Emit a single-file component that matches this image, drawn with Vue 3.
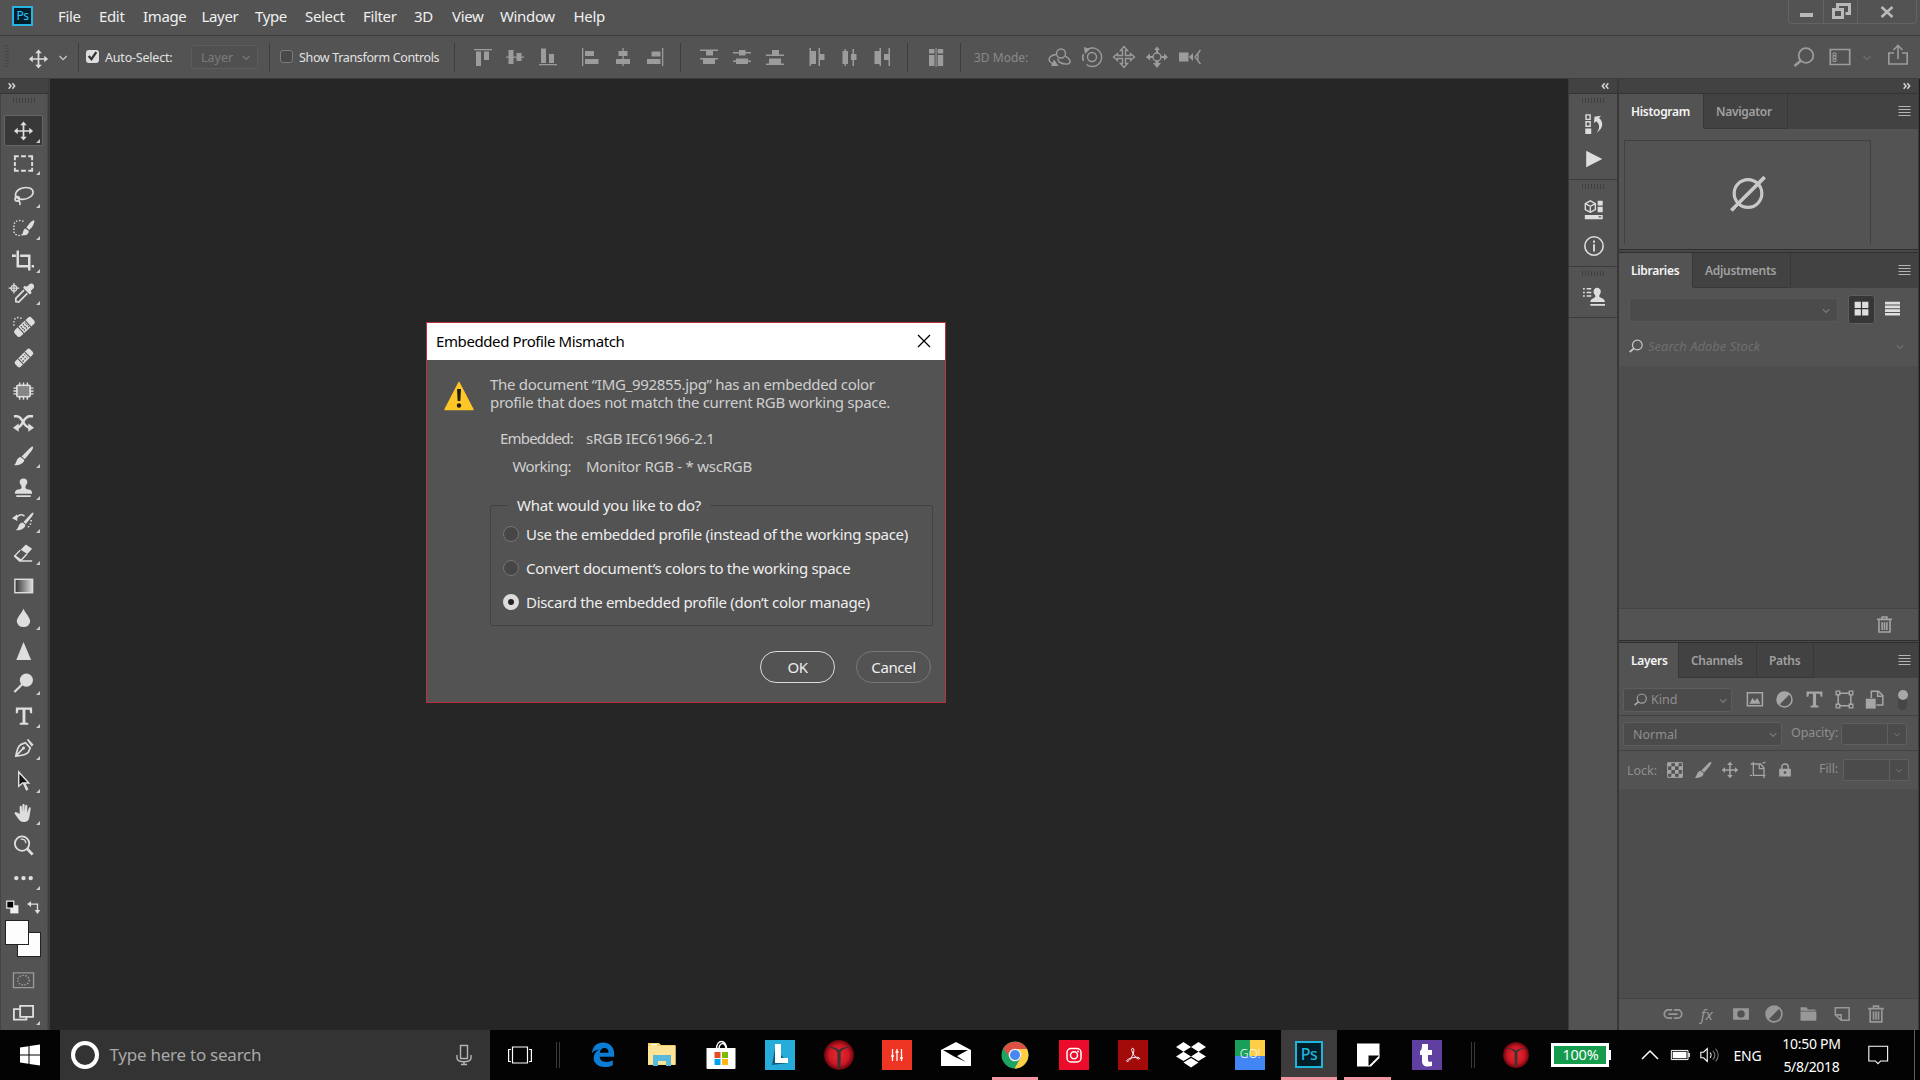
<template>
  <div class="screen">
    <header class="menubar">
      <div class="ps-logo">Ps</div>
      <nav class="menus">
        <span v-for="m in menus" :key="m.label" :style="{ width: m.w + 'px' }">{{ m.label }}</span>
      </nav>
      <div class="win-controls">
        <span class="min"><i></i></span>
        <span class="restore"><Icon name="restore" /></span>
        <span class="close"><Icon name="winClose" /></span>
      </div>
    </header>

    <div class="options">
      <i class="grip-v"></i>
      <Icon name="move" class="opt-move" />
      <Icon name="chevron" class="opt-chev" />
      <i class="sep"></i>
      <span class="check on"><Icon name="tick" :size="13" /></span>
      <span class="opt-label auto">Auto-Select:</span>
      <span class="select layer">Layer<Icon name="chevron" :size="22" /></span>
      <i class="sep s2"></i>
      <span class="check off"></span>
      <span class="opt-label transform">Show Transform Controls</span>
      <i class="sep"></i>
      <div class="icon-row g1"><Icon v-for="n in alignTop" :key="n" :name="n" /></div>
      <div class="icon-row g2"><Icon v-for="n in alignSide" :key="n" :name="n" /></div>
      <i class="sep"></i>
      <div class="icon-row g3"><Icon v-for="n in distTop" :key="n" :name="n" /></div>
      <div class="icon-row g4"><Icon v-for="n in distSide" :key="n" :name="n" /></div>
      <i class="sep"></i>
      <div class="icon-row g5"><Icon name="autoAlign" /></div>
      <i class="sep"></i>
      <span class="mode3d">3D Mode:</span>
      <div class="icon-row g6"><Icon v-for="n in modes3d" :key="n" :name="n" /></div>
      <div class="opt-right">
        <Icon name="search" />
        <Icon name="workspace" />
        <Icon name="chevron" class="faint" />
        <Icon name="share" />
      </div>
    </div>

    <main class="body">
      <aside class="tools">
        <div class="strip-head"><Icon name="arrowsR" :size="8" /></div>
        <div class="tool-panel">
          <i class="grip"></i>
          <div class="tool-list">
            <div v-for="t in tools" :key="t.name" class="tool" :class="{ active: t.name === current }">
              <Icon :name="t.name" />
              <b v-if="t.more" class="corner"></b>
            </div>
          </div>
          <div class="mini"><Icon name="defaults" :size="14" /><Icon name="swap" :size="14" /></div>
          <div class="swatches"><i class="bg"></i><i class="fg"></i></div>
          <div class="tool mask"><Icon name="quickMask" /></div>
          <div class="tool mode"><Icon name="screenMode" /><b class="corner"></b></div>
        </div>
      </aside>

      <section class="canvas"></section>

      <aside class="dock">
        <div class="strip-head"><Icon name="arrowsL" :size="8" /></div>
        <div class="dock-group d1"><i class="grip"></i><Icon name="history" /><Icon name="play" /></div>
        <div class="dock-group d2"><i class="grip"></i><Icon name="cube" /><Icon name="info" /></div>
        <div class="dock-group d3"><i class="grip"></i><Icon name="cloneSource" /></div>
        <div class="dock-rest"></div>
      </aside>

      <aside class="panels">
        <div class="strip-head"><Icon name="arrowsR" :size="8" /></div>

        <section class="panel p-histogram">
          <div class="tabs">
            <span class="tab on t-histogram">Histogram</span>
            <span class="tab t-navigator">Navigator</span>
            <Icon name="menu" :size="13" />
          </div>
          <div class="histogram"><Icon name="empty" :size="40" /></div>
        </section>

        <section class="panel p-libraries">
          <div class="tabs">
            <span class="tab on t-libraries">Libraries</span>
            <span class="tab t-adjust">Adjustments</span>
            <Icon name="menu" :size="13" />
          </div>
          <div class="lib-bar">
            <span class="select lib"><Icon name="chevron" :size="22" /></span>
            <span class="grid-btn"><Icon name="grid" :size="15" /></span>
            <Icon name="list" :size="15" />
          </div>
          <div class="stock"><Icon name="search" :size="16" /><em>Search Adobe Stock</em><Icon name="chevron" :size="22" /></div>
          <div class="well"></div>
          <div class="lib-foot"><Icon name="trash" :size="19" /></div>
        </section>

        <section class="panel p-layers">
          <div class="tabs">
            <span class="tab on t-layers">Layers</span>
            <span class="tab t-channels">Channels</span>
            <span class="tab t-paths">Paths</span>
            <Icon name="menu" :size="13" />
          </div>
          <div class="row filter">
            <span class="select kind"><Icon name="search" :size="15" />Kind<Icon name="chevron" :size="22" /></span>
            <div class="filters"><Icon v-for="n in filters" :key="n" :name="n" :size="19" /></div>
            <span class="toggle"></span>
          </div>
          <div class="row blend">
            <span class="select normal">Normal<Icon name="chevron" :size="22" /></span>
            <span class="field-label">Opacity:</span>
            <span class="number"><i></i><Icon name="chevron" :size="22" /></span>
          </div>
          <div class="row lock">
            <span class="lock-label">Lock:</span>
            <div class="locks"><Icon v-for="n in locks" :key="n" :name="n" :size="20" /></div>
            <span class="field-label">Fill:</span>
            <span class="number"><i></i><Icon name="chevron" :size="22" /></span>
          </div>
          <div class="well"></div>
          <div class="layer-foot">
            <Icon name="link" :size="20" />
            <span class="fx">fx</span>
            <Icon v-for="n in layerActions" :key="n" :name="n" :size="20" />
          </div>
        </section>
      </aside>
      <i class="screen-edge"></i>
    </main>

    <footer class="taskbar">
      <div class="start"><Icon name="windows" /></div>
      <div class="search">
        <i class="cortana"></i>
        <span>Type here to search</span>
        <Icon name="mic" />
      </div>
      <div class="taskview"><Icon name="taskView" /></div>
      <i class="bar-sep"></i>
      <div class="apps">
        <div v-for="a in apps" :key="a.name" class="app" :class="{ running: a.running, focused: a.focused }">
          <div v-if="a.name === 'photoshop'" class="ps-tile">Ps</div>
          <div v-else-if="a.name === 'go'" class="go-tile"><span>GO!</span></div>
          <Icon v-else :name="a.name" :size="a.size || 30" :box="30" />
        </div>
      </div>
      <i class="bar-sep last"></i>
      <div class="tray">
        <Icon name="yoga" :size="26" :box="30" class="tray-yoga" />
        <div class="charge">100%</div>
        <Icon name="caretUp" class="tray-caret" />
        <Icon name="battery" class="tray-battery" />
        <Icon name="volume" class="tray-volume" />
        <span class="lang">ENG</span>
        <div class="clock"><span>10:50 PM</span><span>5/8/2018</span></div>
        <Icon name="action" class="tray-action" />
        <i class="peek"></i>
      </div>
    </footer>

    <div class="dialog" v-if="showDialog">
      <div class="dialog-title">
        <span>Embedded Profile Mismatch</span>
        <Icon name="dialogClose" :size="14" :box="14" @click="showDialog = false" />
      </div>
      <div class="dialog-body">
        <Icon name="warning" :size="30" :box="30" class="warn" />
        <div class="dialog-main">
          <p class="message">The document “IMG_992855.jpg” has an embedded color<br />profile that does not match the current RGB working space.</p>
          <dl>
            <dt class="embedded">Embedded:</dt><dd>sRGB IEC61966-2.1</dd>
            <dt class="working">Working:</dt><dd>Monitor RGB - * wscRGB</dd>
          </dl>
          <div class="group">
            <span class="legend">What would you like to do?</span>
            <label v-for="(o, i) in choices" :key="i" @click="choice = i">
              <i class="radio" :class="{ on: choice === i }"></i><span>{{ o }}</span>
            </label>
          </div>
          <div class="buttons">
            <button class="ok" @click="showDialog = false">OK</button>
            <button class="cancel" @click="showDialog = false">Cancel</button>
          </div>
        </div>
      </div>
    </div>
  </div>
</template>

<script setup>
import { ref, h } from 'vue'

const S = 'fill="none" stroke="currentColor"'

const shapes = {
  move: `<path ${S} stroke-width="1.8" d="M12 4v16M4 12h16"/><path fill="currentColor" d="M12 2l3.4 4H8.6zM12 22l3.4-4H8.6zM2 12l4-3.4v6.8zM22 12l-4-3.4v6.8z"/>`,
  chevron: `<path ${S} stroke-width="1.3" d="M8.5 11l3.6 3.6 3.6-3.6"/>`,
  tick: `<path ${S} stroke-width="4.2" d="M5 11l5 6 9-13"/>`,
  restore: `<path ${S} stroke-width="3" d="M8.5 8V4.500h12v9h-4M4.500 9.500h9v8h-9z"/>`,
  winClose: `<path ${S} stroke-width="2.6" d="M6.500 7l11 10M17.500 7l-11 10"/>`,
  aTop: `<path fill="currentColor" d="M3 4h18v1.300H3zM5 6.500h5V21H5zM13 6.500h5V15h-5z"/>`,
  aMid: `<path fill="currentColor" d="M3 11.400h18v1.300H3zM5.500 5h5v14h-5zM13.500 8h5v8h-5z"/>`,
  aBot: `<path fill="currentColor" d="M3 19h18v1.300H3zM5 3.500h5V18H5zM13 9h5v9h-5z"/>`,
  aLeft: `<path fill="currentColor" d="M4 3h1.300v18H4zM7 6h9v5H7zM7 14h13.500v5H7z"/>`,
  aCen: `<path fill="currentColor" d="M11.400 3h1.300v18h-1.300zM7.500 6h9v5h-9zM5 14h14v5H5z"/>`,
  aRight: `<path fill="currentColor" d="M19 3h1.300v18H19zM8.500 6.500h9v5h-9zM4 14h13.500v5H4z"/>`,
  dTop: `<path fill="currentColor" d="M3 4.500h18V6H3zM9 6h7v4.500H9zM3 13h18v1.400H3zM6 14h12v5H6z"/>`,
  dMid: `<path fill="currentColor" d="M3 7h18v1.400H3zM9 5h6.500v5.500H9zM3 15.500h18V17H3zM6 13.500h12V19H6z"/>`,
  dBot: `<path fill="currentColor" d="M3 9.500h18V11H3zM9 5h7v5H9zM3 18.500h18V20H3zM6 13.500h12v5H6z"/>`,
  dLeft: `<path fill="currentColor" d="M4.500 3H6v18H4.500zM6 6h5v13H6zM13.500 3H15v18h-1.500zM14 9h5.500v6H14z"/>`,
  dCen: `<path fill="currentColor" d="M7.500 4h1.400v17H7.500zM5.500 6H11v13H5.500zM15.500 4H17v17h-1.500zM14 9h5.500v6H14z"/>`,
  dRight: `<path fill="currentColor" d="M9.500 3H11v18H9.500zM4.500 6H10v13H4.500zM18.500 3H20v18h-1.500zM14 9h5v6h-5z"/>`,
  autoAlign: `<path fill="currentColor" d="M5 4h5.500v4.500H5zM5 10h5.500v11H5zM11.600 3h1v19h-1zM13.700 4h5.500v4.500h-5.500zM13.700 10h5.500v11h-5.500z"/>`,
  orbit: `<g ${S} stroke-width="1.400"><circle cx="14" cy="8.500" r="4.500"/><path d="M9 9.500c-5 .5-8 3.500-6.500 6.500.8 1.600 2 2 4 3M18.500 11c4 2.500 6 6 3.500 7.500-2 1-6 .5-10-1.500l-1.500-3.500"/></g><path fill="currentColor" d="M7 14.500l4.500 6.500H4z"/>`,
  roll: `<g ${S} stroke-width="1.400"><circle cx="12" cy="12" r="4.500"/><path d="M8 4a9.300 9.300 0 1 1-1.500 15.500M3.500 16c-1-2-1-5 0-7"/></g><path fill="currentColor" d="M4 2l6 2-5 5z"/>`,
  pan: `<path ${S} stroke-width="1.400" d="M12 1.500l3.500 4h-2v5h5v-2l4 3.500-4 3.500v-2h-5v5h2L12 22.500l-3.500-4h2v-5h-5v2l-4-3.500 4-3.500v2h5v-5h-2z"/>`,
  slide: `<circle cx="12" cy="12" r="4" ${S} stroke-width="1.400"/><path fill="currentColor" d="M12 1.500l3 3.500h-2v3h-2V5H9zM1 12l4-3.500v2.500h3v2H5v2.500zM23 12l-4-3.500v2.500h-3v2h3v2.500zM12 23l4-5h-2.500v-2h-3v2H8z"/>`,
  camera: `<path fill="currentColor" d="M1 7.500h9.500v9H1zM11 12l4-4v8z"/><path ${S} stroke-width="1.300" d="M22.500 5L17 12l5.500 7M20 9.500v5"/>`,
  search: `<circle cx="14" cy="10.500" r="7.300" ${S} stroke-width="1.800"/><path ${S} stroke-width="2.600" d="M9 15.500l-6.500 5.500"/>`,
  workspace: `<path ${S} stroke-width="1.700" d="M2.300 4.500h19.400v15H2.300z"/><path ${S} d="M5 8h3v2.500H5zM5 11h3v2.500H5zM5 14h3v2.500H5z"/>`,
  share: `<path ${S} stroke-width="1.600" d="M8 9H2.800v11h18.400V9H16M12 15V2M7.500 6L12 1.500 16.500 6"/>`,
  arrowsR: `<path ${S} stroke-width="4.500" d="M2 4l7 8-7 8M13 4l7 8-7 8"/>`,
  arrowsL: `<path ${S} stroke-width="4.500" d="M11 4l-7 8 7 8M22 4l-7 8 7 8"/>`,
  marquee: `<path ${S} stroke-width="2" d="M3 9V5h4M9.500 5h5M17 5h4v4M21 11v4M21 17v3h-4M14.500 20h-5M7 20H3v-3M3 15v-4"/>`,
  lasso: `<g ${S} stroke-width="1.700"><path d="M5 14c-3-3-1-8 5-10s12 0 12 4-6 8-12 7.500c-2-.200-3.500-.700-5-1.500"/><circle cx="5.500" cy="15" r="2.300"/><path d="M6 17c2 .500 3 2 2 4.500"/></g>`,
  quickSelect: `<path ${S} stroke-width="1.500" stroke-dasharray="1.500 1.700" d="M12 5c-6-2-10 0-10 5v5c0 5 6 5.500 9 4"/><path fill="currentColor" d="M23 4c1 0 0 4-2 7l-3 3-3-2.500 3-4c1.500-2 4-3.500 5-3.500zM14 12.500l3.500 2.500c0 4-4 5-7.500 4.500 2-1.500 1-6 4-7z"/>`,
  crop: `<path ${S} stroke-width="2.600" d="M6 1v16.500h11M0 6.500h4M8.500 6.500h9.500v15.500M20.500 17.500H23"/>`,
  eyedropper: `<circle cx="2" cy="7" r="3" ${S} stroke-width="1.300"/><path ${S} stroke-width="1.300" d="M2 1.500v11M-3.500 7h11"/><path fill="currentColor" d="M18 3c3-2.500 6.500 1 4.500 4l-3 3 1 2-2 1.500-7-7 2-2 2 1z"/><path ${S} stroke-width="1.800" d="M12.500 9l-8.500 8.500v3.500l3 .500L16 12.500"/>`,
  spotHeal: `<path ${S} stroke-width="1.500" stroke-dasharray="1.500 1.800" d="M10 4C5 2 2 4 2 8v4"/><g transform="rotate(-43 13 13)"><rect x="1" y="8.500" width="24" height="9" rx="2.500" fill="currentColor"/><path stroke="#535353" stroke-width="1.100" d="M8 8v10M18 8v10"/><path stroke="#535353" stroke-width="1.500" stroke-dasharray="1.500 1.500" d="M10 10.700h7M10 13h7M10 15.300h7"/></g>`,
  heal: `<g transform="rotate(-45 12.500 12)"><rect x="1.500" y="8" width="22" height="8" rx="2.200" fill="currentColor"/><path stroke="#535353" d="M7.500 8v8M17.500 8v8"/><path stroke="#535353" stroke-width="1.500" stroke-dasharray="1.500 1.500" d="M9 10.500h7M9 13.500h7"/></g>`,
  patch: `<rect x="5" y="6" width="14" height="12" rx="1.500" fill="#858585" stroke="currentColor" stroke-width="1.700"/><path ${S} stroke-width="1.500" d="M8 3v4M12 3v4M16 3v4M8 17v4M12 17v4M16 17v4M1.500 9H6M1.500 12H6M1.500 15H6M18 9h4.500M18 12h4.500M18 15h4.500"/>`,
  contentMove: `<path ${S} stroke-width="2.600" d="M2 5h3c7 0 6 12 14 12M22 5h-4c-7 1-6 11-13 12"/><path fill="currentColor" d="M1 17l6-4.500V21zM23 17l-6-4.500V21z"/>`,
  brush: `<path fill="currentColor" d="M21.500 2c1 .500.500 2-1 4.500L13.500 15 10 12.500l8-8C19.500 3 20.700 1.700 21.500 2zM9 13l3.800 2.800c0 4-5.500 6-10.800 5.700C5 20 4 14 9 13z"/>`,
  stamp: `<path fill="currentColor" d="M12 2a4 4 0 0 1 4 4c0 2-2 3-2 5 0 1.500 1 2.500 3 2.500 2.500 0 4 1 4 4.500H3c0-3.500 1.500-4.500 4-4.500 2 0 3-1 3-2.500 0-2-2-3-2-5a4 4 0 0 1 4-4zM4.500 19.500h15V21.500h-15z"/>`,
  historyBrush: `<path fill="currentColor" d="M22 3c1 .500 0 2-1 4l-6.500 8L12 13l7-7.500C20 4 21 3 22 3zM11 13.500l3 2.300c0 4-5 6-10 5.700 3.500-2 2-7 7-8zM0 9l5.500-4v7z"/><path ${S} stroke-width="1.700" d="M5 8c3-3 6-3 8-1"/><path ${S} stroke-width="1.600" stroke-dasharray="1.500 2" d="M20 11c0 3-1 6-4 8"/>`,
  eraser: `<path fill="currentColor" d="M14.500 3l6.500 4.500-5 5.500-7-4.500z"/><path fill="none" stroke="currentColor" stroke-width="1.500" d="M8.500 9l-5.500 6 6.500 4.500 6-6.500"/><path ${S} stroke-width="1.700" d="M2.500 15l5.500 5.300H21"/>`,
  gradient: `<defs><linearGradient id="gt"><stop offset="0" stop-color="#333"/><stop offset="1" stop-color="#ddd"/></linearGradient></defs><rect x="3" y="5" width="18.500" height="14" fill="url(#gt)" stroke="currentColor" stroke-width="1.500"/>`,
  blur: `<path fill="currentColor" d="M12 2c1 4 7 9 7 13.500a7 6 0 0 1-14 0C5 11 11 6 12 2z"/>`,
  sharpen: `<path fill="currentColor" d="M12 2.500L20 21.500H4.500z"/>`,
  dodge: `<circle cx="15" cy="9" r="6.800" fill="currentColor"/><path ${S} stroke-width="2.200" d="M11 13l-8.500 8.500"/>`,
  type: `<path fill="currentColor" d="M4 3h17v6h-2l-.700-3.500H14v13.200l3 .600V21H8v-1.700l3-.600V5.500H6.700L6 9H4z"/>`,
  pen: `<path ${S} stroke-width="1.800" d="M4 20.500c1-6 2.500-10.500 5-12l5-2 5 5.500-2 4.500c-2 2.500-7 3.500-13 4zM4.500 20l7-7.500"/><circle cx="12" cy="12" r="1.600" fill="currentColor"/><path fill="currentColor" d="M15.500 3.500L17 2.500l5.500 6-2 2z"/>`,
  pathSelect: `<path fill="#111" stroke="currentColor" stroke-width="1.500" d="M7 2.500v15l4-3.500h6.500z"/><path ${S} stroke-width="2.600" d="M12.500 14l3.500 7.500"/>`,
  hand: `<path fill="currentColor" d="M8 13V6c0-2 2-2 2.300 0l.5 5V4c0-2 2.400-2 2.400 0v7l.600-6.500c.200-1.700 2.200-1.600 2.200.200L16 12l1.500-5c.500-1.600 2.300-1 2 .700L18 17c-.700 3-2.500 4.500-5.500 4.500S8 20 6.500 18L3 13c-1-2 1-2.800 2.300-1.500z"/>`,
  zoom: `<circle cx="10.500" cy="9.500" r="7.500" ${S} stroke-width="1.900"/><path ${S} stroke-width="1.300" d="M9 5c3-.500 5 1 5.500 4"/><path ${S} stroke-width="3" d="M15.500 14.500l6 6.500"/>`,
  dots: `<path fill="currentColor" d="M4.500 9.800a2.300 2.300 0 1 1 0 4.600 2.300 2.300 0 0 1 0-4.600zM12 9.800a2.300 2.300 0 1 1 0 4.600 2.300 2.300 0 0 1 0-4.600zM19.500 9.800a2.300 2.300 0 1 1 0 4.600 2.300 2.300 0 0 1 0-4.600z"/>`,
  defaults: `<path fill="#eee" d="M9 9h14v14H9z"/><path fill="#000" stroke="#eee" stroke-width="2" d="M3 2h12v12H3z"/>`,
  swap: `<path ${S} stroke-width="2.300" d="M3 7h15v12"/><path fill="currentColor" d="M0 7l7-5v10zM18 24l-5-7h10z"/>`,
  quickMask: `<path fill="none" stroke="#9a9a9a" stroke-width="1.400" d="M1.500 4.500h21v15.500h-21z"/><ellipse cx="12" cy="12.200" rx="6" ry="5" fill="none" stroke="#aaa" stroke-width="1.300" stroke-dasharray="1.500 1.500"/>`,
  screenMode: `<path ${S} stroke-width="1.900" d="M8 8H2v11h13v-3"/><path ${S} stroke-width="1.900" d="M8.500 4.500h13.500V16H8.500z"/>`,
  history: `<path ${S} stroke-width="1.500" d="M3.300 2h4.500v5H3.300zM3.300 9.500h4.500v5H3.300z"/><path fill="currentColor" d="M2.500 17H9v6H2.500zM12.500 4l7-1-2 2.500c5 4 5 11-2.500 16 3.500-5 3.500-9-.500-12.500l-2.500 2z"/>`,
  play: `<path fill="currentColor" d="M3.500 3L21 12 3.500 21z"/>`,
  cube: `<path ${S} stroke-width="1.500" d="M2.500 5L8 2l5.500 3v6.500L8 14.500l-5.500-3zM2.500 5L8 8l5.500-3M8 8v6.500"/><path fill="currentColor" d="M16 2h5.500v5H16zM16 8.500h5.500v6H16zM2 17.500h19.500V22H2z"/><path fill="#535353" d="M16.500 18.800h4l-2 2z"/>`,
  info: `<circle cx="12" cy="12" r="10" ${S} stroke-width="1.700"/><path fill="currentColor" d="M11 6h2v2.400h-2zM11 10h2v8h-2z"/>`,
  cloneSource: `<path fill="currentColor" d="M15.500 2a4 4 0 0 1 3.800 5c-.600 2-1.600 2.300-1.600 4.500 0 1.500 6 1.500 6.300 6H8c.200-4 5.500-4.500 5.500-6 0-2.200-1.500-2.500-1.900-4.500a4 4 0 0 1 3.900-5zM8 19.500h16v2H8z"/><path ${S} stroke-width="1.700" d="M0 3h2M4 3h5M0 7h2M4 7h5M0 11h2M4 11h5"/>`,
  menu: `<path ${S} stroke-width="2.400" d="M0 3h24M0 9h24M0 15h24M0 21h24"/>`,
  empty: `<path stroke="#222" stroke-width="1.500" fill="none" d="M4.500 21L21.500 3"/><circle cx="12" cy="12.300" r="8.300" ${S} stroke-width="1.900"/><path ${S} stroke-width="2.200" d="M2 22.500L22 2.500"/>`,
  grid: `<path fill="currentColor" d="M1 1h10v10H1zM13 1h10v10H13zM1 13h10v10H1zM13 13h10v10H13z"/>`,
  list: `<path fill="currentColor" d="M0 1h24v4.500H0zM0 7.300h24v4.300H0zM0 13.300h24v4.300H0zM0 19.300h24V23H0z"/>`,
  trash: `<path ${S} stroke-width="2" d="M5 7v14.500h14V7M2.500 5.500h19M9 5V2.500h6V5M9 9v10M12 9v10M15 9v10"/>`,
  fImage: `<path ${S} stroke-width="1.900" d="M3 3.500h19v16.500H3z"/><path fill="currentColor" d="M5.500 17.500l4-7.500 3 4 3-4 4 7.500z"/>`,
  adjust: `<circle cx="12" cy="12" r="9.500" ${S} stroke-width="1.900"/><path fill="currentColor" d="M18.800 5.200A9.500 9.500 0 0 0 5.200 18.800z"/>`,
  fType: `<path fill="currentColor" d="M2 2h20v6.500h-2.200l-.8-3.700h-5v14.500l3 .700V22H7v-2l3-.700V4.800H5L4.200 8.500H2z"/>`,
  fShape: `<path ${S} stroke-width="1.900" d="M4 4h16v16H4z"/><path fill="#535353" stroke="currentColor" stroke-width="1.700" d="M1.500 1.500h4.500v4.500H1.500zM18 1.500h4.500v4.500H18zM1.500 18h4.500v4.500H1.500zM18 18h4.500v4.500H18z"/>`,
  fSmart: `<path ${S} stroke-width="1.900" d="M8 10V1.500h9l5.500 5.500v12h-8M16 1.500V8h6.500"/><path fill="currentColor" d="M1 11h12.500v12.500H1z"/>`,
  lPixels: `<path ${S} stroke-width="1.500" d="M1 1h22v22H1z"/><path fill="currentColor" d="M1 1h5.500v5.500H1zM12 1h5.500v5.500H12zM6.500 6.500H12V12H6.500zM17.500 6.500H23V12h-5.500zM1 12h5.500v5.500H1zM12 12h5.500v5.500H12zM6.500 17.500H12V23H6.500zM17.500 17.500H23V23h-5.500z"/>`,
  lBoard: `<path ${S} stroke-width="1.900" d="M5 0v20h18M1 3h15l5 6v15M19 2l4-2M0 20h3M14 4v6h7"/>`,
  lLock: `<path fill="currentColor" fill-rule="evenodd" d="M2 10h20v13H2zM12 14a2.300 2.300 0 1 0 0 4.600 2.300 2.300 0 0 0 0-4.600z"/><path ${S} stroke-width="2.300" d="M6.500 11V7c0-7 11-7 11 0v4"/>`,
  link: `<g ${S} stroke-width="2.100"><path d="M11 7H6.500a5 5 0 0 0 0 10H11M13 7h4.500a5 5 0 0 1 0 10H13M6.500 12h11"/></g>`,
  mask: `<path fill="currentColor" fill-rule="evenodd" d="M3 5h19v14H3zM12.500 7.500a4.500 4.500 0 1 0 0 9 4.500 4.500 0 0 0 0-9z" transform="translate(-.5)"/>`,
  folder: `<path fill="currentColor" d="M3 4h7l2 2.500h9V8H3zM3 9h19v11H3z"/>`,
  newLayer: `<path ${S} stroke-width="1.900" d="M4 13V4.500h16.500v15H11zM4 13h7v6.500"/>`,
  windows: `<path fill="#fff" d="M2 4.500l8.500-1.300v8.300H2zM11.500 3L22 1.500v10H11.500zM2 12.500h8.500v8.300L2 19.500zM11.500 12.500H22v10L11.500 21z"/>`,
  mic: `<g fill="none" stroke="#b5b5b5" stroke-width="1.400"><path d="M8.500 2.500h7v13h-7zM5 12v3c0 5 14 5 14 0v-3M12 18.500V21M9 21.500h6"/></g>`,
  taskView: `<path fill="none" stroke="#fff" stroke-width="1.200" d="M4.500 4h15v16h-15zM3 6.500H.600v12H3M21 6.500h2.400v12H21"/>`,
  edge: `<path fill="#0c7cd5" d="M3 13C4 5 9 1.500 15 1.500c8 0 12 6 12 12V17H11.500c0 4 3.500 5.500 7 5.500 3 0 5-.700 7-1.800v5.200c-2.500 1.400-5 2-8.500 2C9 28 4.500 23 5 17.500c.400-4 3-7 6-8.500-4 .500-6.500 2-8 4zM11.500 12.500H21c0-3.500-2-5-4.500-5s-4.500 1.800-5 5z"/>`,
  explorer: `<path fill="#f5cf68" d="M1 3h11l2 2h14.500v20H1z"/><path fill="#ffe497" d="M1 6h27.500v18.500H1z"/><path fill="#57b9dc" d="M6 15h18v11h-5v-5h-8v5H6z"/><path fill="#fff" d="M4 4h6v1.500H4z"/>`,
  store: `<path fill="none" stroke="#fff" stroke-width="1.500" d="M10.500 9c0-10 10-10 10 0M13 9c0-6 6-8 7-1"/><path fill="#fff" d="M.5 8h29v20q0 1-1 1h-27q-1 0-1-1z"/><path fill="#e74c23" d="M8.500 12h6v6h-6z"/><path fill="#7eb900" d="M16 12h6v6h-6z"/><path fill="#00a3ee" d="M8.500 19h6v6h-6z"/><path fill="#fdb813" d="M16 19h6v6h-6z"/>`,
  lenovo: `<path fill="#27acd9" d="M0 0h30v30H0z"/><path fill="#135b7d" d="M10 8L7 25l16-2z"/><path fill="#fff" d="M10 4h6v14h7v5H10z"/>`,
  yoga: `<defs><radialGradient id="yr"><stop offset="0" stop-color="#e22b2d"/><stop offset=".65" stop-color="#cf1826"/><stop offset="1" stop-color="#67050b"/></radialGradient></defs><circle cx="15" cy="15" r="15" fill="url(#yr)"/><path fill="#3a3436" d="M4 7.500c4-1 8 0 11 2.500 3-2.500 7-3.500 11-2.500-4 .5-8 2-9.300 4.500L16.500 28h-3L13.300 12C12 9.500 8 8 4 7.500z"/>`,
  equalizer: `<path fill="#ee3524" d="M0 0h30v30H0z"/><path stroke="#fff" stroke-width="1.300" d="M10.500 9v12M15 9v12M19.500 9v12"/><path stroke="#fff" stroke-width="1.500" d="M9 16h3M13.500 12h3M18 18h3"/>`,
  mail: `<path fill="#fff" d="M0 10l15-8 15 8v16H0z"/><path fill="#000" d="M2 10h25l-11 6 9 6-12-5.500z"/>`,
  chrome: `<circle cx="15" cy="15" r="13.500" fill="#1da362"/><path fill="#dd5144" d="M3.300 8.500A13.500 13.500 0 0 1 27 9H15l-5.500 8z"/><path fill="#ffce44" d="M27 9a13.500 13.500 0 0 1-12.500 19.500L20.500 18 20 12l-5-3z"/><circle cx="15" cy="15" r="6.300" fill="#f1f1f1"/><circle cx="15" cy="15" r="5" fill="#4688f1"/>`,
  instagram: `<path fill="#ea0c2a" d="M0 0h30v30H0z"/><g fill="none" stroke="#fff" stroke-width="1.500"><rect x="8" y="8.500" width="14" height="13.500" rx="4"/><circle cx="15" cy="15.200" r="3.500"/></g><circle cx="19" cy="11.500" r="1" fill="#fff"/>`,
  acrobat: `<path fill="#a30b0b" d="M0 0h30v30H0z"/><path fill="none" stroke="#fff" stroke-width="1" d="M14 8.500c2-1 2.500 2 1 5.500-1.500 4-4 7.500-6 7.500-1.500-1.500 3-3.500 7-4 4-.600 6 0 5.500 1.300-1.500 1.200-5-2.300-6.500-5.300-1-2-2-4.500-1-5z"/>`,
  dropbox: `<path fill="#fff" d="M7.500 2L15 7l-7.500 4.700L0 7zM22.500 2L30 7l-7.500 4.700L15 7zM7.500 11.800L15 16.500 7.500 21 0 16.500zM22.500 11.800L30 16.500 22.500 21 15 16.500zM15 18l7.500 4.500L15 27.500l-7.500-5z"/>`,
  sticky: `<path fill="#fff" d="M4 3.500h22.500V16H16v10.500H4z"/><path fill="#fff" d="M15 26.500h3L26.500 18v-3z"/><path fill="#080808" d="M15.500 15.500h10.500l-10.500 10.500z"/>`,
  tumblr: `<path fill="#5f3fa0" d="M0 0h30v30H0z"/><path fill="#fff" d="M10 4h6v6h4v5h-4v5c0 2 2 2 4 1.500V26c-7 1.500-10-.500-10-5v-6H8v-4c2-1 2-4 2-7z"/>`,
  caretUp: `<path fill="none" stroke="#fff" stroke-width="1.500" d="M4 16l8-8 8 8"/>`,
  battery: `<path fill="none" stroke="#fff" stroke-width="1.200" d="M1.600 6.500h20v11h-20z"/><path fill="#fff" d="M3.200 8.200h16.600v7.600H3.200zM22 9.500h1.800v5H22z"/>`,
  volume: `<path fill="none" stroke="#fff" stroke-width="1.200" d="M2 9h3l4-4v14l-4-4H2zM12 9.500c1.500 1.500 1.500 4 0 5.500"/><path fill="none" stroke="#777" stroke-width="1.200" d="M15 7.500c3 3 3 6.500 0 9.500M18 5c4 4 4 10 0 14"/>`,
  action: `<path fill="none" stroke="#fff" stroke-width="1.200" d="M2 2.500h20.500v16H15l-3 3-3-3H2z"/>`,
  dialogClose: `<path fill="none" stroke="#000" stroke-width="1.300" d="M1 1l12 12M13 1L1 13"/>`,
  warning: `<path fill="#ffc627" stroke="#ffc627" stroke-width="1.500" stroke-linejoin="round" d="M15 1.500L29 28.500H1z"/><path fill="#1b1b1b" d="M13 8h4l-.700 12h-2.600z"/><circle cx="15" cy="24.500" r="2.200" fill="#1b1b1b"/>`
}

// small svg wrapper, shapes are drawn on a 24 unit box unless told otherwise
const Icon = ({ name, size = 24, box = 24 }) =>
  h('svg', { class: 'icon', width: size, height: size, viewBox: `0 0 ${box} ${box}`, innerHTML: shapes[name] })
Icon.props = ['name', 'size', 'box']

const menus = [
  { label: 'File', w: 41 },
  { label: 'Edit', w: 44 },
  { label: 'Image', w: 58.5 },
  { label: 'Layer', w: 53.5 },
  { label: 'Type', w: 50 },
  { label: 'Select', w: 58 },
  { label: 'Filter', w: 51 },
  { label: '3D', w: 38 },
  { label: 'View', w: 48 },
  { label: 'Window', w: 73.5 },
  { label: 'Help', w: 50 }
]

const alignTop = ['aTop', 'aMid', 'aBot']
const alignSide = ['aLeft', 'aCen', 'aRight']
const distTop = ['dTop', 'dMid', 'dBot']
const distSide = ['dLeft', 'dCen', 'dRight']
const modes3d = ['orbit', 'roll', 'pan', 'slide', 'camera']
const filters = ['fImage', 'adjust', 'fType', 'fShape', 'fSmart']
const locks = ['lPixels', 'brush', 'move', 'lBoard', 'lLock']
const layerActions = ['mask', 'adjust', 'folder', 'newLayer', 'trash']

const current = ref('move')
const tools = [
  { name: 'move', more: true },
  { name: 'marquee', more: true },
  { name: 'lasso', more: true },
  { name: 'quickSelect', more: true },
  { name: 'crop', more: true },
  { name: 'eyedropper', more: true },
  { name: 'spotHeal' },
  { name: 'heal' },
  { name: 'patch' },
  { name: 'contentMove' },
  { name: 'brush', more: true },
  { name: 'stamp', more: true },
  { name: 'historyBrush', more: true },
  { name: 'eraser', more: true },
  { name: 'gradient' },
  { name: 'blur', more: true },
  { name: 'sharpen' },
  { name: 'dodge', more: true },
  { name: 'type', more: true },
  { name: 'pen', more: true },
  { name: 'pathSelect', more: true },
  { name: 'hand', more: true },
  { name: 'zoom' },
  { name: 'dots', more: true }
]

const apps = [
  { name: 'edge', size: 28 },
  { name: 'explorer' },
  { name: 'store' },
  { name: 'lenovo' },
  { name: 'yoga' },
  { name: 'equalizer' },
  { name: 'mail' },
  { name: 'chrome', running: true },
  { name: 'instagram' },
  { name: 'acrobat' },
  { name: 'dropbox' },
  { name: 'go' },
  { name: 'photoshop', running: true, focused: true },
  { name: 'sticky', running: true },
  { name: 'tumblr' }
]

const showDialog = ref(true)
const choice = ref(2)
const choices = [
  'Use the embedded profile (instead of the working space)',
  'Convert document’s colors to the working space',
  'Discard the embedded profile (don’t color manage)'
]
</script>

<style>
body {
  background: #262626;
  overflow: hidden;
}
</style>

<style scoped>
* {
  box-sizing: border-box;
}
.screen {
  position: relative;
  display: flex;
  flex-direction: column;
  width: 1920px;
  height: 1080px;
  overflow: hidden;
  background: #262626;
  color: #dcdcdc;
  font-family: "Noto Sans", "Open Sans", sans-serif;
  font-size: 13px;
  white-space: nowrap;
}
.icon {
  display: block;
  flex: none;
  overflow: visible;
}

/* menu bar */
.menubar {
  display: flex;
  height: 36px;
  flex: none;
  background: #535353;
  border-bottom: 1px solid #3c3c3c;
}
.ps-logo {
  width: 21px;
  height: 20px;
  margin: 6px 0 0 12px;
  border: 2px solid #26b5e0;
  background: #001d2a;
  color: #26c9ff;
  font-size: 12px;
  line-height: 15px;
  text-align: center;
  letter-spacing: -0.5px;
}
.menus {
  display: flex;
  margin-left: 25px;
  font-size: 15px;
  line-height: 33px;
  letter-spacing: -0.35px;
  color: #f0f0f0;
}
.win-controls {
  display: flex;
  width: 129px;
  height: 24px;
  margin: 0 3px 0 auto;
  border: 1px solid #636363;
  border-top: 0;
  border-radius: 0 0 4px 4px;
  color: #b9b9b9;
}
.win-controls span {
  display: flex;
  align-items: center;
  justify-content: center;
}
.min {
  width: 35px;
  border-right: 1px solid #636363;
}
.min i {
  width: 13px;
  height: 4px;
  margin-top: 6px;
  background: #b9b9b9;
}
.restore {
  width: 34px;
  border-right: 1px solid #636363;
}
.close {
  width: 58px;
}

/* options bar */
.options {
  display: flex;
  align-items: center;
  height: 43px;
  flex: none;
  background: #535353;
  border-bottom: 1px solid #3c3c3c;
  color: #9c9c9c;
}
.grip-v {
  width: 4px;
  height: 24px;
  margin-left: 5px;
  background: repeating-linear-gradient(#444 0 1px, transparent 1px 3px);
}
.opt-move {
  margin: 3px 0 0 18px;
  width: 23px;
  color: #dcdcdc;
}
.opt-chev {
  margin: 0 0 0 1px;
  color: #c8c8c8;
}
.sep {
  width: 1px;
  height: 29px;
  flex: none;
  margin-left: 3px;
  background: #3d3d3d;
}
.check {
  display: flex;
  width: 13px;
  height: 13px;
  margin: -2px 0 0 7px;
  border-radius: 3px;
}
.check.on {
  background: #dedede;
  color: #333;
}
.check.off {
  margin-left: 10px;
  border: 1px solid #7c7c7c;
  background: #494949;
}
.opt-label {
  color: #e2e2e2;
  font-size: 12.5px;
  margin-left: 6px;
}
.auto {
  width: 86px;
  letter-spacing: -0.2px;
}
.transform {
  width: 152px;
  letter-spacing: -0.35px;
}
.select {
  display: flex;
  align-items: center;
  justify-content: space-between;
  height: 24px;
  padding-left: 9px;
  border: 1px solid #5d5d5d;
  border-radius: 3px;
  background: #4b4b4b;
  color: #8f8f8f;
  font-size: 12.5px;
}
.select .icon {
  color: #7c7c7c;
}
.select.layer {
  width: 67px;
  color: #7c7c7c;
  background: #505050;
}
.s2 {
  margin-left: 11px;
}
.icon-row {
  display: flex;
  gap: 8.7px;
}
.options .icon-row + .sep {
  margin-left: 12.5px;
}
.g1 {
  margin-left: 15.5px;
}
.g2 {
  margin-left: 18px;
}
.g3 {
  margin-left: 16.5px;
}
.g4 {
  margin-left: 18px;
}
.g5 {
  margin-left: 16px;
}
.g5 + .sep {
  margin-left: 13px;
}
.mode3d {
  width: 73px;
  margin-left: 13px;
  color: #8a8a8a;
  font-size: 12px;
}
.opt-right {
  display: flex;
  align-items: center;
  margin: 0 10px 0 auto;
}
.opt-right .icon:nth-child(2) {
  margin-left: 12px;
}
.opt-right .icon:nth-child(3) {
  margin-left: 3px;
}
.opt-right .icon:nth-child(4) {
  margin-left: 7px;
  margin-top: -2px;
}
.opt-right .faint {
  color: #6c6c6c;
}

/* body */
.body {
  display: flex;
  height: 951px;
  flex: none;
}
.strip-head {
  display: flex;
  align-items: center;
  height: 15px;
  flex: none;
  background: #424242;
  border-bottom: 1px solid #343434;
  color: #d5d5d5;
}
.grip {
  display: block;
  width: 24px;
  height: 5px;
  background: repeating-linear-gradient(90deg, #3f3f3f 0 1px, transparent 1px 3px);
}
.tools {
  display: flex;
  flex-direction: column;
  width: 50px;
  border-right: 2px solid #3e3e3e;
}
.tools .strip-head {
  padding-left: 8px;
}
.tool-panel {
  flex: 1;
  background: #535353;
  border-left: 1px solid #444;
  border-right: 1px solid #484848;
  color: #dedede;
}
.tool-panel .grip {
  margin: 4px 0 0 12px;
}
.tool-list {
  padding-top: 11.3px;
}
.tool {
  position: relative;
  display: flex;
  align-items: center;
  justify-content: center;
  width: 39px;
  height: 32.5px;
  margin-left: 3px;
}
.tool.active::before {
  content: "";
  position: absolute;
  inset: 1px 0;
  background: #383838;
  border: 1px solid #666;
  border-radius: 2px;
}
.tool .icon {
  position: relative;
  width: 23px;
}
.corner {
  position: absolute;
  right: 3px;
  bottom: 4px;
  border-left: 4px solid transparent;
  border-bottom: 4px solid #ccc;
}
.mini {
  display: flex;
  gap: 8px;
  padding: 6px 0 0 4px;
}
.swatches {
  position: relative;
  height: 38px;
  margin-top: 5px;
}
.swatches i {
  position: absolute;
  width: 24px;
  height: 25px;
  background: #fdfdfd;
  border: 1px solid #222;
}
.swatches .fg {
  left: 4px;
  top: 1px;
}
.swatches .bg {
  left: 16px;
  top: 13px;
}
.mask {
  margin-top: 6.5px;
}
.canvas {
  flex: 1;
  background: #262626;
}

.dock {
  display: flex;
  flex-direction: column;
  width: 51px;
  border-left: 1px solid #3a3a3a;
  border-right: 2px solid #383838;
  color: #dedede;
}
.dock .strip-head {
  justify-content: flex-end;
  padding-right: 8px;
}
.dock-group {
  display: flex;
  flex-direction: column;
  align-items: center;
  padding: 4px 0 0 2px;
  background: #535353;
  border-bottom: 1px solid #3b3b3b;
}
.d1 {
  height: 86px;
}
.d2 {
  height: 87px;
}
.d3 {
  height: 51px;
}
.dock-group .grip {
  margin-bottom: 9px;
}
.dock-group .icon {
  width: 22px;
}
.dock-group .icon + .icon {
  margin-top: 11px;
}
.d2 .icon + .icon {
  margin-top: 12px;
}
.dock-rest {
  flex: 1;
  background: #535353;
}

/* panels */
.panels {
  display: flex;
  flex-direction: column;
  width: 300px;
  background: #484848;
  border-right: 1px solid #3c3c3c;
}
.panels > .strip-head {
  justify-content: flex-end;
  padding-right: 7px;
}
.screen-edge {
  width: 1px;
  background: #1c1c1c;
}
.panel {
  display: flex;
  flex-direction: column;
  background: #535353;
}
.p-histogram {
  height: 156px;
  margin-bottom: 2px;
  border-bottom: 1px solid #2f2f2f;
}
.p-libraries {
  height: 389px;
  margin-bottom: 1px;
  border-top: 1px solid #2f2f2f;
  border-bottom: 1px solid #2f2f2f;
}
.p-layers {
  flex: 1;
  border-top: 1px solid #2f2f2f;
}
.tabs {
  display: flex;
  height: 35px;
  flex: none;
  background: #424242;
}
.tabs .icon {
  margin: 11px 7px 0 auto;
  height: 12px;
  color: #b4b4b4;
}
.tab {
  padding: 0 0 0 12px;
  border-right: 1px solid #383838;
  border-bottom: 1px solid #383838;
  color: #a0a0a0;
  font-size: 12px;
  font-weight: 600;
  line-height: 35px;
  letter-spacing: -0.3px;
}
.tab.on {
  background: #535353;
  border-bottom-color: #535353;
  color: #f5f5f5;
}
.t-histogram {
  width: 85px;
}
.t-navigator {
  width: 84px;
}
.t-libraries {
  width: 74px;
}
.t-adjust {
  width: 98px;
}
.t-layers {
  width: 60px;
}
.t-channels {
  width: 78px;
}
.t-paths {
  width: 57px;
}
.histogram {
  display: flex;
  align-items: center;
  justify-content: center;
  width: 247px;
  height: 104px;
  margin: 11px 0 0 5px;
  border: 1px solid #414141;
  border-bottom: 0;
  color: #c9c9c9;
}
.lib-bar {
  display: flex;
  align-items: center;
  height: 43px;
  padding-left: 10px;
  color: #dedede;
}
.select.lib {
  width: 209px;
  justify-content: flex-end;
  background: #4b4b4b;
  border-color: #585858;
}
.grid-btn {
  display: flex;
  align-items: center;
  justify-content: center;
  width: 27px;
  height: 29px;
  margin: -1px 10px 0 10px;
  padding-bottom: 2px;
  border: 1px solid #5e5e5e;
  border-radius: 3px;
  background: #363636;
}
.grid-btn + .icon {
  margin-top: -3px;
}
.stock {
  display: flex;
  align-items: center;
  height: 35px;
  padding: 0 7px 5px 9px;
  color: #6f6f6f;
  font-size: 13px;
}
.stock .icon:first-child {
  color: #c8c8c8;
}
.stock em {
  margin: 0 auto 0 4px;
}
.well {
  flex: 1;
  background: #4d4d4d;
  border-bottom: 1px solid #444;
}
.lib-foot {
  display: flex;
  align-items: center;
  justify-content: flex-end;
  height: 31px;
  padding-right: 24px;
  color: #a6a6a6;
}
.row {
  display: flex;
  align-items: center;
  padding-left: 4px;
  color: #8f8f8f;
}
.filter {
  height: 38px;
  padding-top: 6px;
  border-bottom: 1px solid #434343;
}
.select.kind {
  width: 109px;
  justify-content: flex-start;
}
.kind .icon:first-child {
  margin-right: 3px;
  color: #a6a6a6;
}
.kind .icon:last-child,
.normal .icon {
  margin-left: auto;
  margin-right: -3px;
}
.filters {
  display: flex;
  gap: 11px;
  margin-left: 13px;
  color: #a6a6a6;
}
.toggle {
  width: 9px;
  height: 20px;
  margin-left: 14px;
  border-radius: 5px;
  background: #464646;
}
.toggle::before {
  content: "";
  display: block;
  width: 10px;
  height: 10px;
  border-radius: 50%;
  background: #a8a8a8;
}
.blend {
  height: 35px;
  padding-top: 2px;
  border-bottom: 1px solid #434343;
}
.select.normal {
  width: 159px;
}
.field-label {
  margin: -3px 0 0 9px;
  width: 50px;
  font-size: 12.5px;
  letter-spacing: -0.1px;
}
.number {
  display: flex;
  align-items: center;
  justify-content: center;
  width: 66px;
  height: 22px;
  border: 1px solid #5f5f5f;
  background: #4b4b4b;
  border-radius: 2px;
  color: #747474;
}
.number i {
  width: 46px;
  height: 20px;
  border-right: 1px solid #5f5f5f;
}
.number .icon {
  width: 18px;
}
.lock {
  height: 38px;
}
.lock-label {
  width: 35px;
  margin-left: 4px;
  font-size: 12.5px;
}
.locks {
  display: flex;
  align-items: center;
  gap: 7.5px;
  padding-left: 3px;
  color: #a6a6a6;
}
.locks .icon:nth-child(1),
.locks .icon:nth-child(4) {
  width: 16px;
  margin: 0 2px;
}
.locks .icon:nth-child(5) {
  width: 14px;
  margin: 0 3px;
}
.lock .field-label {
  width: 24px;
  margin-left: 24px;
}
.layer-foot {
  display: flex;
  align-items: center;
  gap: 13.8px;
  height: 31px;
  padding: 0 0 2px 44px;
  color: #989898;
}
.fx {
  width: 20px;
  text-align: center;
  font-size: 15px;
  font-style: italic;
  line-height: 20px;
}

/* taskbar */
.taskbar {
  display: flex;
  height: 50px;
  flex: none;
  align-items: center;
  background: #030303;
  color: #fff;
}
.start {
  display: flex;
  justify-content: center;
  width: 60px;
}
.search {
  display: flex;
  align-items: center;
  width: 430px;
  height: 50px;
  padding: 0 14px 0 11px;
  background: #333;
  color: #a9a9a9;
  font-size: 17px;
}
.cortana {
  width: 28px;
  height: 28px;
  border: 4px solid #fff;
  border-radius: 50%;
}
.search span {
  margin: -1px auto 0 10.5px;
  letter-spacing: -0.25px;
}
.taskview {
  display: flex;
  justify-content: center;
  width: 60px;
}
.bar-sep {
  width: 4px;
  height: 26px;
  flex: none;
  margin-left: 6px;
  border: 1px solid #3a3a3a;
  border-width: 0 1px;
}
.bar-sep.last {
  margin-left: 15.5px;
}
.apps {
  display: flex;
  margin-left: 14px;
}
.app {
  position: relative;
  display: flex;
  align-items: center;
  justify-content: center;
  width: 58.8px;
  height: 50px;
}
.app.focused::before {
  content: "";
  position: absolute;
  inset: 0 1px;
  background: #3d3b3b;
}
.app.running::after {
  content: "";
  position: absolute;
  left: 6px;
  right: 6px;
  bottom: 0;
  height: 3px;
  background: #f096a2;
}
.app.focused::after {
  left: 1px;
  right: 1px;
}
.ps-tile {
  position: relative;
  width: 28px;
  height: 27px;
  margin-top: -2px;
  border: 2px solid #1fb4dc;
  background: #001d28;
  color: #1fb4dc;
  font-size: 16px;
  font-weight: 500;
  letter-spacing: -0.5px;
  line-height: 22px;
  text-align: center;
}
.go-tile {
  display: flex;
  justify-content: center;
  width: 30px;
  height: 30px;
  background: linear-gradient(#4285f4, #4285f4) 0 16px / 30px 14px no-repeat, linear-gradient(90deg, #1a9f5b 15px, #ffcd46 15px);
  font-size: 12px;
  font-weight: 300;
  line-height: 28px;
}
.tray {
  display: flex;
  align-items: center;
  flex: 1;
  padding-left: 28px;
}
.charge {
  position: relative;
  width: 58px;
  height: 24px;
  margin-left: 22px;
  border: 3px solid #fff;
  background: #149b4c;
  font-size: 14.5px;
  line-height: 17px;
  text-align: center;
  letter-spacing: -0.2px;
}
.charge::after {
  content: "";
  position: absolute;
  right: -5px;
  top: 4px;
  width: 2px;
  height: 10px;
  background: #fff;
}
.tray-caret {
  margin-left: 29px;
}
.tray-battery {
  width: 20px;
  margin-left: 8px;
}
.tray-volume {
  width: 22px;
  margin-left: 9px;
}
.lang {
  width: 30px;
  margin-left: 12px;
  font-size: 14px;
  letter-spacing: -0.2px;
}
.clock {
  display: flex;
  flex-direction: column;
  align-items: center;
  width: 62px;
  margin-left: 17px;
  font-size: 14px;
  line-height: 23px;
  letter-spacing: -0.3px;
}
.tray-action {
  width: 22px;
  margin-left: 25px;
}
.peek {
  width: 1px;
  height: 50px;
  margin: 0 5px 0 auto;
  background: #5f5f5f;
}

/* dialog */
.dialog {
  position: absolute;
  left: 426px;
  top: 322px;
  width: 520px;
  height: 381px;
  border: 1px solid #b9303f;
  background: #535353;
  font-size: 15px;
}
.dialog-title {
  display: flex;
  align-items: center;
  justify-content: space-between;
  height: 37px;
  padding: 0 14px 2px 9px;
  background: #fff;
  color: #000;
  font-size: 15px;
  letter-spacing: -0.4px;
}
.dialog-body {
  display: flex;
  padding: 15px 12px 0 17px;
  letter-spacing: -0.31px;
}
.warn {
  margin-top: 6px;
}
.dialog-main {
  flex: 1;
  margin-left: 16px;
}
.message {
  margin: 0;
  line-height: 18px;
  color: #cfcfcf;
}
dl {
  display: grid;
  grid-template-columns: 83px 1fr;
  row-gap: 10px;
  column-gap: 13px;
  margin: 18px 0 0;
  line-height: 18px;
  color: #cfcfcf;
}
dt {
  text-align: right;
}
.embedded {
  letter-spacing: -0.8px;
}
.working {
  padding-right: 2px;
  letter-spacing: -0.6px;
}
dd {
  margin: 0;
  letter-spacing: -0.25px;
}
.group {
  display: flex;
  flex-direction: column;
  gap: 16px;
  height: 121px;
  margin: 30px 0 0;
  padding: 17px 0 0 12px;
  border: 1px solid #434343;
  border-radius: 2px;
  color: #eee;
  line-height: 18px;
}
.legend {
  align-self: flex-start;
  margin: -27px 0 -5px 5px;
  padding: 0 9px;
  background: #535353;
  letter-spacing: -0.2px;
}
.group label {
  display: flex;
  align-items: center;
}
.radio {
  width: 16px;
  height: 16px;
  margin-right: 7px;
  border: 1px solid #757575;
  border-radius: 50%;
  background: #464646;
}
.radio.on {
  border: 5px solid #dcdcdc;
  background: #222;
}
.buttons {
  display: flex;
  justify-content: flex-end;
  gap: 21px;
  margin-top: 25px;
  padding-right: 2px;
}
button {
  width: 75px;
  height: 32px;
  padding: 0;
  border: 1px solid #777;
  border-radius: 16px;
  background: none;
  color: #eee;
  font-family: inherit;
  font-size: 15px;
  letter-spacing: -0.4px;
}
.ok {
  border: 1.5px solid #dcdcdc;
}
</style>
